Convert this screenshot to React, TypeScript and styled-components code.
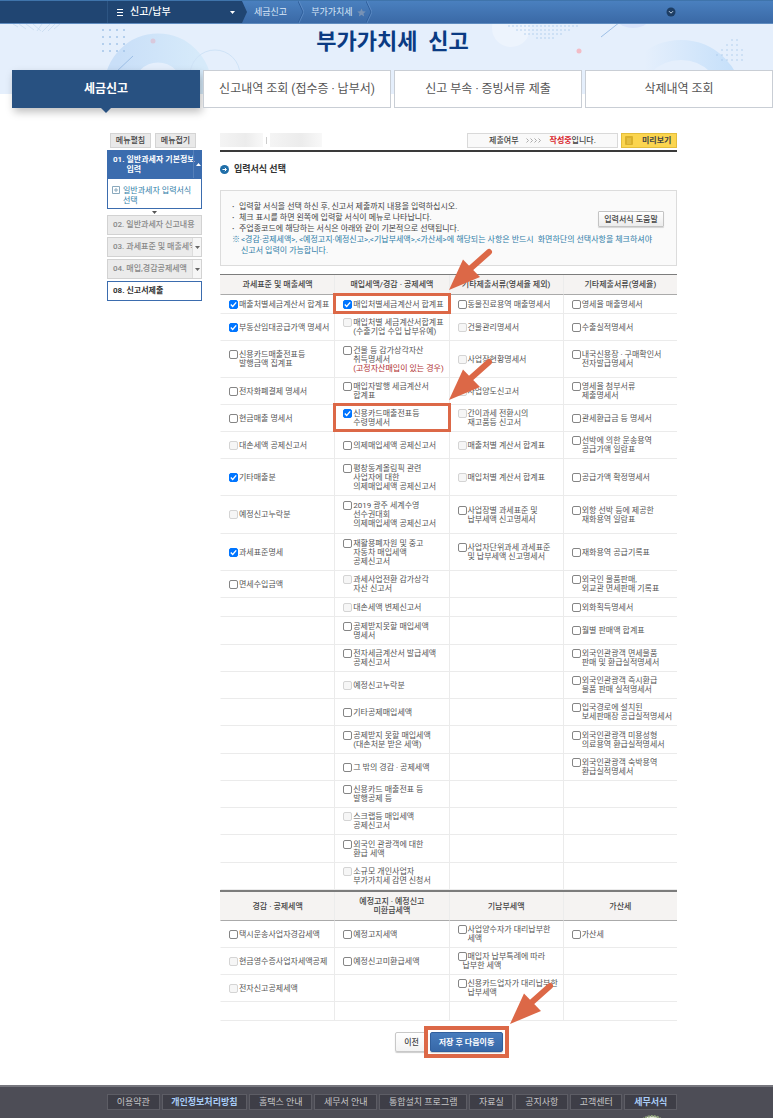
import React from "react";
import styled, { createGlobalStyle, css } from "styled-components";

const Global = createGlobalStyle`
  *, *::before, *::after { box-sizing: border-box; }
  body {
    margin: 0;
    background: #fff;
    color: #555;
    font: 8px/9px Roboto, "Noto Sans CJK KR", sans-serif;
  }
  button { font: inherit; color: inherit; cursor: pointer; padding: 0; }
  a { color: inherit; text-decoration: none; }
  ul { list-style: none; margin: 0; padding: 0; }
  h1, h2, p { margin: 0; }
`;

const accent = "#dc6847";

const Page = styled.div`
  min-height: 100vh;
  display: flex;
  flex-direction: column;
`;

/* ---------- top bar ---------- */

const TopBar = styled.header`
  display: flex;
  height: 24px;
  padding-right: 96px;
  border-top: 1px solid #3f74ab;
  border-bottom: 1px solid #5f8cc0;
  background: linear-gradient(#4a80bf, #3a69a6);
  color: #dce9f8;
  font-size: 9px;
  line-height: 22px;
`;

const MenuArea = styled.div`
  background: #204572;
  padding-left: 107px;
`;

const MenuButton = styled.button`
  display: flex;
  align-items: center;
  width: 135px;
  height: 22px;
  padding: 0 7px 0 9px;
  border: 0;
  border-left: 1px solid #2d5583;
  background: none;
  color: #fff;
  font-size: 10px;
  font-weight: 500;
  gap: 7px;

  span {
    flex: 1;
    text-align: left;
  }
`;

const Crumbs = styled.nav`
  display: flex;
  flex: 1;
  align-items: center;

  a {
    display: flex;
    align-items: center;
    gap: 4px;
    padding: 0 11px 0 7px;
  }
  a:last-of-type { padding-right: 0; }
`;

const RoundButton = styled.button`
  display: flex;
  align-self: center;
  width: 10px;
  height: 10px;
  margin-right: 1px;
  border: 0;
  background: none;
`;

/* ---------- title area ---------- */

const Hero = styled.div`
  position: relative;
  height: 70px;
  background: #e5effc;
  text-align: center;
`;

const HeroArt = styled.svg`
  position: absolute;
  inset: 0;
  width: 100%;
  height: 70px;
`;

const Title = styled.h1`
  position: relative;
  padding: 4px 0 0 12px;
  color: #0b3b83;
  font-size: 22px;
  line-height: 28px;
  font-weight: 700;
  white-space: pre;
`;

const Tabs = styled.nav`
  position: relative;
  display: grid;
  grid-template-columns: repeat(4, 1fr);
  gap: 3px;
  margin-top: -24px;
  padding-left: 12px;
`;

const Tab = styled.a<{ $active?: boolean }>`
  position: relative;
  height: 38px;
  border: 1px solid #c9ced5;
  background: #fff;
  color: #555;
  font-size: 12px;
  line-height: 36px;
  text-align: center;
  ${(p) =>
    p.$active &&
    css`
      border-color: #285181;
      background: #285181;
      color: #fff;
      font-weight: 700;
      box-shadow: 2px 4px 8px rgba(0, 0, 0, 0.25);

      &::after {
        content: "";
        position: absolute;
        top: 100%;
        left: 50%;
        margin-left: -6px;
        border: 6px solid transparent;
        border-top-color: #285181;
        border-bottom: 0;
      }
    `}
`;

/* ---------- body columns ---------- */

const Body = styled.div`
  display: flex;
  gap: 18px;
  padding: 25px 96px 33px 107px;
`;

const Side = styled.aside`
  flex: none;
  width: 95px;
`;

const SideButtons = styled.div`
  display: flex;
  gap: 4px;
  padding: 0 3px;
  margin-bottom: 2px;

  button {
    width: 41px;
    height: 15px;
    border: 1px solid #d4d4d4;
    background: #e9e9e9;
    color: #444;
    font-weight: 500;
  }
`;

const SideHead = styled.a`
  display: flex;
  height: 28px;
  background: #3b6cae;
  color: #fff;
  font-weight: 700;
  line-height: 10px;
`;

const SideHeadText = styled.span`
  flex: 1;
  min-width: 0;
  display: flex;
  gap: 2px;
  padding: 5px 0 0 6px;
  white-space: pre;
`;

const SideToggle = styled.span<{ $light?: boolean }>`
  flex: none;
  position: relative;
  display: flex;
  align-items: center;
  justify-content: center;
  width: 9px;
  border-left: 1px solid ${(p) => (p.$light ? "#ddd" : "#5580ba")};
  background: ${(p) => (p.$light ? "#f6f6f6" : "transparent")};
`;

const SideSub = styled.a`
  display: flex;
  gap: 3px;
  height: 31px;
  padding: 7px 4px 0;
  border: 1px solid #3b6cae;
  color: #2f7da8;
  line-height: 10px;
  white-space: pre;
`;

const PlusIcon = styled.svg`
  width: 8px;
  height: 8px;
`;

const DownMark = styled.div`
  display: flex;
  justify-content: center;
  height: 6px;
  padding-top: 2px;
`;

const SideItem = styled.a<{ $open?: boolean }>`
  display: flex;
  height: 20px;
  margin-bottom: 2px;
  border: 1px solid ${(p) => (p.$open ? "#3b6cae" : "#d2d2d2")};
  background: ${(p) => (p.$open ? "#fff" : "#ebebeb")};
  color: ${(p) => (p.$open ? "#333" : "#888")};
  font-weight: ${(p) => (p.$open ? 700 : 500)};
  line-height: 18px;

  > span:first-child {
    flex: 1;
    min-width: 0;
    padding-left: 5px;
    white-space: nowrap;
  }
`;

const Main = styled.main`
  flex: 1;
  min-width: 0;
`;

const StatusRow = styled.div`
  display: flex;
  align-items: center;
  gap: 3px;
  height: 19px;
  padding-bottom: 3px;
  border-bottom: 2px solid #3a3a3a;
`;

const Masked = styled.span<{ $wide?: boolean }>`
  width: ${(p) => (p.$wide ? 52 : 43)}px;
  height: 14px;
  background: linear-gradient(90deg, #f4f4f4, #ececec 60%, #f8f8f8);
`;

const Bar = styled.i`
  width: 1px;
  height: 7px;
  background: #ccc;
`;

const Status = styled.p`
  display: flex;
  justify-content: center;
  align-items: center;
  gap: 7px;
  width: 151px;
  height: 15px;
  margin-left: auto;
  border: 1px solid #d9d9d9;
  background: #f9f9f9;
  color: #444;
  font-weight: 500;

  b { color: #d8232a; }
`;

const Preview = styled.button`
  display: flex;
  align-items: center;
  gap: 9px;
  width: 56px;
  height: 15px;
  padding-left: 3px;
  border: 1px solid #e3bd3b;
  background: #fbd54f;
  color: #444;
  font-weight: 700;
`;

const Heading = styled.h2`
  display: flex;
  align-items: center;
  gap: 5px;
  height: 12px;
  margin: 11px 0 15px;
  color: #333;
  font-size: 9px;
  font-weight: 700;
`;

const Info = styled.section`
  display: flex;
  align-items: flex-start;
  height: 76px;
  padding: 10px 12px 0 11px;
  border: 1px solid #dcdcdc;
  background: #fafafa;
  line-height: 11px;
`;

const Notes = styled.ul`
  flex: 1;
  width: 0;
  white-space: nowrap;
  color: #444;

  li { display: flex; gap: 4px; }
  li::before { content: "·"; width: 3px; font-weight: 700; }
  li.mark { gap: 2px; color: #2f7da8; white-space: pre; }
  li.mark::before { content: "※"; width: 7px; font-weight: 400; }
`;

const HelpButton = styled.button`
  width: 66px;
  height: 16px;
  margin-top: 10px;
  border: 1px solid #c4c4c4;
  border-radius: 1px;
  background: linear-gradient(#fff, #ececec);
  box-shadow: 0 1px 1px rgba(0, 0, 0, 0.15);
  color: #444;
  font-weight: 500;
`;

/* ---------- form tables ---------- */

const Table = styled.table<{ $first?: boolean }>`
  width: 100%;
  margin-top: ${(p) => (p.$first ? 8 : 0)}px;
  table-layout: fixed;
  border-collapse: separate;
  border-spacing: 0;
  border-top: ${(p) => (p.$first ? 1 : 2)}px solid #7c7c7c;

  th {
    height: ${(p) => (p.$first ? 20 : 29)}px;
    padding: 0;
    border-bottom: 1px solid #aaa;
    border-left: 1px solid #ececec;
    background: #f5f3f2;
    color: #444;
    font-weight: 500;
    white-space: pre;
  }

  td {
    position: relative;
    padding: 0 0 0 8px;
    border-bottom: 1px solid #ebebeb;
    border-left: 1px solid #ebebeb;
    vertical-align: middle;
  }

  th:first-child,
  td:first-child { border-left-color: transparent; }
`;

const rowHeight: Record<number, number> = { 1: 19, 2: 27, 3: 37 };

const Row = styled.tr<{ $lines: number }>`
  height: ${(p) => rowHeight[p.$lines]}px;
  &:nth-child(4n + 8) { height: ${(p) => rowHeight[p.$lines] + (p.$lines > 1 ? 1 : 0)}px; }
`;

const Check = styled.label`
  display: flex;
  gap: 1px;
  white-space: pre;

  em { color: #b03030; font-style: normal; }
`;

const Box = styled.input`
  appearance: none;
  flex: none;
  width: 9px;
  height: 9px;
  margin: 0;
  border: 1px solid #858585;
  border-radius: 2px;
  background: #fff;

  &:checked {
    border-color: #0075ff;
    background: #0075ff
      url("data:image/svg+xml,%3Csvg xmlns='http://www.w3.org/2000/svg' viewBox='0 0 7 7'%3E%3Cpath d='M.8 3.6 2.7 5.5 6.2 1.4' fill='none' stroke='%23fff' stroke-width='1.4'/%3E%3C/svg%3E");
  }
  &:disabled {
    border-color: #d4d4d4;
    background: #f6f6f6;
  }
`;

const ItemText = styled.span<{ $outdent?: boolean }>`
  ${(p) =>
    p.$outdent &&
    css`
      margin-left: -5px;
      text-indent: 5px;
    `}
`;

/* ---------- callouts ---------- */

const Frame = styled.span<{ $around?: "cell" | "button" }>`
  position: absolute;
  z-index: 2;
  inset: ${(p) => (p.$around === "button" ? "-6px" : "-2px -2px -1px -2px")};
  border: ${(p) => (p.$around === "button" ? 4 : 3)}px solid ${accent};
  pointer-events: none;

  svg {
    position: absolute;
    left: calc(100% + ${(p) => (p.$around === "button" ? 5 : 1)}px);
    bottom: calc(100% + 6px);
    width: 46px;
    height: 42px;
    overflow: visible;
  }
`;

function Callout({ around = "cell" }: { around?: "cell" | "button" }) {
  return (
    <Frame $around={around} aria-hidden="true">
      <svg viewBox="0 0 46 42">
        <path d="M22 20 40 4" stroke={accent} strokeWidth="6" strokeLinecap="round" />
        <path d="M0 42 14 11.500 31 29Z" fill={accent} />
      </svg>
    </Frame>
  );
}

/* ---------- actions and footer ---------- */

const Actions = styled.div`
  display: flex;
  justify-content: center;
  gap: 2px;
  margin-top: 11px;
  padding-left: 1px;
`;

const ActionWrap = styled.div`
  position: relative;
  display: flex;
`;

const Action = styled.button<{ $primary?: boolean }>`
  width: ${(p) => (p.$primary ? 73 : 33)}px;
  height: 20px;
  border: 1px solid ${(p) => (p.$primary ? "#315f9c" : "#c8c8c8")};
  border-radius: 2px;
  background: ${(p) => (p.$primary ? "linear-gradient(#477cbd, #3768a8)" : "linear-gradient(#fff, #f3f3f3)")};
  color: ${(p) => (p.$primary ? "#fff" : "#444")};
  font-weight: ${(p) => (p.$primary ? 700 : 500)};
  box-shadow: 0 1px 1px rgba(0, 0, 0, 0.2);
`;

const Footer = styled.footer`
  position: relative;
  flex: 1;
  min-height: 33px;
  padding: 7px 96px 8px 107px;
  border-top: 2px solid #77777e;
  background: #4d4d56;
  overflow: hidden;
`;

const FooterNav = styled.nav`
  display: flex;
  gap: 2px;
`;

const FooterLink = styled.a<{ $strong?: boolean }>`
  flex: 1 1 auto;
  height: 16px;
  padding: 0 7px;
  border: 1px solid #5d5d65;
  background: #3e3e47;
  color: ${(p) => (p.$strong ? "#a9cdf8" : "#c6c6c8")};
  font-size: 9px;
  font-weight: ${(p) => (p.$strong ? 700 : 400)};
  line-height: 14px;
  text-align: center;
  white-space: nowrap;
`;

const Emblem = styled.svg`
  position: absolute;
  top: 28px;
  right: 105px;
  width: 32px;
  height: 32px;
`;

/* ---------- data ---------- */

type Item = {
  text: string;
  on?: boolean;
  off?: boolean;
  note?: string;
  callout?: boolean;
  outdent?: boolean;
};
type RowData = [number, Item | null, Item | null, Item | null, Item | null];

const i = (text: string, extra: Partial<Item> = {}): Item => ({ text, ...extra });
const ON = { on: true };
const OFF = { off: true };

const mainRows: RowData[] = [
  [1, i("매출처별세금계산서 합계표", ON), i("매입처별세금계산서 합계표", { on: true, callout: true }), i("동물진료용역 매출명세서"), i("영세율 매출명세서")],
  [2, i("부동산임대공급가액 명세서", ON), i("매입처별 세금계산서합계표\n(수출기업 수입 납부유예)", OFF), i("건물관리명세서", OFF), i("수출실적명세서")],
  [3, i("신용카드매출전표등\n발행금액 집계표"), i("건물 등 감가상각자산\n취득명세서\n", { note: "(고정자산매입이 있는 경우)" }), i("사업장현황명세서", OFF), i("내국신용장 · 구매확인서\n전자발급명세서")],
  [2, i("전자화폐결제 명세서"), i("매입자발행 세금계산서\n합계표"), i("사업양도신고서", OFF), i("영세율 첨부서류\n제출명세서")],
  [2, i("현금매출 명세서"), i("신용카드매출전표등\n수령명세서", { on: true, callout: true }), i("간이과세 전환시의\n재고품등 신고서", OFF), i("관세환급금 등 명세서")],
  [2, i("대손세액 공제신고서", OFF), i("의제매입세액 공제신고서"), i("매출처별 계산서 합계표", OFF), i("선박에 의한 운송용역\n공급가액 일람표")],
  [3, i("기타매출분", ON), i("평창동계올림픽 관련\n사업자에 대한\n의제매입세액 공제신고서"), i("매입처별 계산서 합계표", OFF), i("공급가액 확정명세서")],
  [3, i("예정신고누락분", OFF), i("2019 광주 세계수영\n선수권대회\n의제매입세액 공제신고서"), i("사업장별 과세표준 및\n납부세액 신고명세서"), i("외항 선박 등에 제공한\n재화용역 일람표")],
  [3, i("과세표준명세", ON), i("재활용폐자원 및 중고\n자동차 매입세액\n공제신고서"), i("사업자단위과세 과세표준\n및 납부세액 신고명세서"), i("재화용역 공급기록표")],
  [2, i("면세수입금액"), i("과세사업전환 감가상각\n자산 신고서", OFF), null, i("외국인 물품판매,\n외교관 면세판매 기록표")],
  [1, null, i("대손세액 변제신고서", OFF), null, i("외화획득명세서")],
  [2, null, i("공제받지못할 매입세액\n명세서"), null, i("월별 판매액 합계표")],
  [2, null, i("전자세금계산서 발급세액\n공제신고서"), null, i("외국인관광객 면세물품\n판매 및 환급실적명세서")],
  [2, null, i("예정신고누락분", OFF), null, i("외국인관광객 즉시환급\n물품 판매 실적명세서")],
  [2, null, i("기타공제매입세액"), null, i("입국경로에 설치된\n보세판매장 공급실적명세서")],
  [2, null, i("공제받지 못할 매입세액\n(대손처분 받은 세액)"), null, i("외국인관광객 미용성형\n의료용역 환급실적명세서")],
  [2, null, i("그 밖의 경감 · 공제세액"), null, i("외국인관광객 숙박용역\n환급실적명세서")],
  [2, null, i("신용카드 매출전표 등\n발행공제 등"), null, null],
  [2, null, i("스크랩등 매입세액\n공제신고서", OFF), null, null],
  [2, null, i("외국인 관광객에 대한\n환급 세액"), null, null],
  [2, null, i("소규모 개인사업자\n부가가치세 감면 신청서", OFF), null, null],
];

const extraRows: RowData[] = [
  [2, i("택시운송사업자경감세액"), i("예정고지세액"), i("사업양수자가 대리납부한\n세액"), i("가산세")],
  [2, i("현금영수증사업자세액공제", OFF), i("예정신고미환급세액"), i("매입자 납부특례에 따라\n납부한 세액", { outdent: true }), null],
  [2, i("전자신고공제세액", OFF), null, i("신용카드업자가 대리납부한\n납부세액"), null],
  [1, null, null, null, null],
];

const footerLinks: [string, boolean?][] = [
  ["이용약관"],
  ["개인정보처리방침", true],
  ["홈택스 안내"],
  ["세무서 안내"],
  ["통합설치 프로그램"],
  ["자료실"],
  ["공지사항"],
  ["고객센터"],
  ["세무서식", true],
];

function FormTable({ heads, rows, first }: { heads: string[]; rows: RowData[]; first?: boolean }) {
  return (
    <Table $first={first}>
      <thead>
        <tr>
          {heads.map((h) => (
            <th key={h} scope="col">{h}</th>
          ))}
        </tr>
      </thead>
      <tbody>
        {rows.map(([lines, ...cells], r) => (
          <Row key={r} $lines={lines}>
            {cells.map((cell, c) => (
              <td key={c}>
                {cell && (
                  <Check>
                    <Box type="checkbox" defaultChecked={cell.on} disabled={cell.off} />
                    <ItemText $outdent={cell.outdent}>
                      {cell.text}
                      {cell.note && <em>{cell.note}</em>}
                    </ItemText>
                  </Check>
                )}
                {cell?.callout && <Callout />}
              </td>
            ))}
          </Row>
        ))}
      </tbody>
    </Table>
  );
}

function Dots({ x, y, rows, gap, r = 1 }: { x: number; y: number; rows: [number, number][]; gap: number; r?: number }) {
  return (
    <g fill="#a3c4e8">
      {rows.map(([from, count], row) =>
        Array.from({ length: count }, (_, n) => (
          <circle key={`${row}-${n}`} cx={x + (from + n) * gap} cy={y + row * gap} r={r} />
        ))
      )}
    </g>
  );
}

function Chevron() {
  return (
    <svg width="6" height="22" viewBox="0 0 6 22" fill="none" aria-hidden="true">
      <path d="M0 0 5 11 0 22" stroke="#2f5f9c" />
      <path d="M1 0 6 11 1 22" stroke="#6a98cf" strokeOpacity=".6" />
    </svg>
  );
}

function Caret({ up, color }: { up?: boolean; color: string }) {
  return (
    <svg width="5" height="3" viewBox="0 0 5 3" aria-hidden="true">
      <path d={up ? "M0 3 2.500 0 5 3Z" : "M0 0 2.500 3 5 0Z"} fill={color} />
    </svg>
  );
}

export default function App() {
  return (
    <Page>
      <Global />
      <TopBar>
        <MenuArea>
          <MenuButton type="button">
            <svg width="6" height="7" viewBox="0 0 6 7" aria-hidden="true">
              <path d="M0 .5h6M0 3.500h6M0 6.500h6" stroke="#fff" />
            </svg>
            <span>신고/납부</span>
            <Caret color="#fff" />
          </MenuButton>
        </MenuArea>
        <svg width="5" height="22" viewBox="0 0 5 22" aria-hidden="true">
          <path d="M0 0 5 11 0 22Z" fill="#204572" />
        </svg>
        <Crumbs>
          <a href="#tax">세금신고</a>
          <Chevron />
          <a href="#vat">
            부가가치세
            <svg width="9" height="9" viewBox="0 0 24 24" aria-hidden="true">
              <path d="m12 1 3.300 7.400 8 .8-6 5.300 1.800 7.900L12 18.300l-7.100 4.100 1.800-7.900-6-5.300 8-.8z" fill="#7792b5" />
            </svg>
          </a>
          <Chevron />
        </Crumbs>
        <RoundButton type="button" aria-label="전체 메뉴">
          <svg width="10" height="10" viewBox="0 0 10 10">
            <circle cx="5" cy="5" r="4.500" fill="#1d3d63" />
            <path d="M3 4.200 5 6.200 7 4.200" fill="none" stroke="#c8d8ea" />
          </svg>
        </RoundButton>
      </TopBar>

      <Hero>
        <HeroArt viewBox="0 0 773 70" preserveAspectRatio="xMidYMin slice" aria-hidden="true">
          <defs>
            <linearGradient id="ringA" x1="0" x2="1">
              <stop offset="0" stopColor="#c9dff8" />
              <stop offset="1" stopColor="#d6eafa" />
            </linearGradient>
            <linearGradient id="ringB" x1="0" x2="1">
              <stop offset=".15" stopColor="#e5effc" />
              <stop offset="1" stopColor="#c6e0fa" />
            </linearGradient>
          </defs>
          <path d="m13 0 5 3m1-3 7 5m0-5 8 6m-1-6 8 7m1-7-5 7m13-7-8 8m13-8-7 7m12-7-6 5" stroke="#c3d8ee" strokeWidth=".7" fill="none" />
          <circle cx="158" cy="63" r="39" fill="none" stroke="url(#ringA)" strokeWidth="29" />
          <circle cx="215" cy="51" r="25" fill="none" stroke="#cfe3f7" />
          <path d="M116 48 133 32" stroke="#9dbfe6" />
          <circle cx="153" cy="17" r="2.500" fill="#d9c9dc" />
          <Dots x={103} y={6} gap={7} rows={[[0, 4], [0, 4], [0, 4], [0, 4]]} />
          <circle cx="511" cy="4" r="19" fill="#edf4fd" />
          <Dots x={509} y={2} gap={4} r={0.7} rows={[[0, 18], [2, 14], [4, 10], [7, 5]]} />
          <path d="M601 13 620-2" stroke="#9dbfe6" />
          <circle cx="633" cy="-20" r="24" fill="#d8e3fa" />
          <circle cx="579" cy="27" r="2.500" fill="#f2bcc6" />
          <circle cx="681" cy="78" r="52" fill="none" stroke="url(#ringB)" strokeWidth="20" />
          <Dots x={717} y={16} gap={5} r={0.7} rows={[[3, 2], [2, 3], [1, 5], [0, 6], [1, 5]]} />
        </HeroArt>
        <Title>{"부가가치세  신고"}</Title>
      </Hero>
      <Tabs>
        <Tab href="#file" $active>세금신고</Tab>
        <Tab href="#history">신고내역 조회 (접수증 · 납부서)</Tab>
        <Tab href="#attach">신고 부속 · 증빙서류 제출</Tab>
        <Tab href="#deleted">삭제내역 조회</Tab>
      </Tabs>

      <Body>
        <Side>
          <SideButtons>
            <button type="button">메뉴펼침</button>
            <button type="button">메뉴접기</button>
          </SideButtons>
          <SideHead href="#step1">
            <SideHeadText>
              <span>01.</span>
              <span>{"일반과세자 기본정보\n입력"}</span>
            </SideHeadText>
            <SideToggle><Caret up color="#fff" /></SideToggle>
          </SideHead>
          <SideSub href="#select">
            <PlusIcon viewBox="0 0 8 8" aria-hidden="true">
              <path d="M.5.5h7v7h-7zM2 4h4M4 2v4" fill="none" stroke="#8aa9bd" />
            </PlusIcon>
            <span>{"일반과세자 입력서식\n선택"}</span>
          </SideSub>
          <DownMark><Caret color="#555" /></DownMark>
          <SideItem href="#step2"><span>02. 일반과세자 신고내용</span></SideItem>
          <SideItem href="#step3">
            <span>03. 과세표준 및 매출세액</span>
            <SideToggle $light><Caret color="#666" /></SideToggle>
          </SideItem>
          <SideItem href="#step4">
            <span>04. 매입,경감공제세액</span>
            <SideToggle $light><Caret color="#666" /></SideToggle>
          </SideItem>
          <SideItem href="#step8" $open><span>08. 신고서제출</span></SideItem>
        </Side>

        <Main>
          <StatusRow>
            <Masked />
            <Bar />
            <Masked $wide />
            <Status>
              <span>제출여부</span>
              <svg width="17" height="5" viewBox="0 0 17 5" fill="none" aria-hidden="true">
                <path d="m.5.5 2 2-2 2m4-4 2 2-2 2m4-4 2 2-2 2m4-4 2 2-2 2" stroke="#aaa" />
              </svg>
              <span><b>작성중</b>입니다.</span>
            </Status>
            <Preview type="button">
              <svg width="8" height="9" viewBox="0 0 8 9" aria-hidden="true">
                <rect width="8" height="9" rx="1" fill="#d9b02c" />
                <path d="M2 3h4M2 5h4M2 7h4" stroke="#eccb55" />
              </svg>
              미리보기
            </Preview>
          </StatusRow>

          <Heading>
            <svg width="9" height="9" viewBox="0 0 9 9" aria-hidden="true">
              <circle cx="4.500" cy="4.500" r="4.500" fill="#1f6ea8" />
              <path d="M2.500 4.500h3.500M4.800 2.800 6.500 4.500 4.800 6.200" stroke="#fff" fill="none" />
            </svg>
            입력서식 선택
          </Heading>

          <Info>
            <Notes>
              <li>입력할 서식을 선택 하신 후, 신고서 제출까지 내용을 입력하십시오.</li>
              <li>체크 표시를 하면 왼쪽에 입력할 서식이 메뉴로 나타납니다.</li>
              <li>주업종코드에 해당하는 서식은 아래와 같이 기본적으로 선택됩니다.</li>
              <li className="mark">
                {"<경감·공제세액>, <예정고지·예정신고>,<기납부세액>,<가산세>에 해당되는 사항은 반드시  화면하단의 선택사항을 체크하셔야\n신고서 입력이 가능합니다."}
              </li>
            </Notes>
            <HelpButton type="button">입력서식 도움말</HelpButton>
          </Info>

          <FormTable
            first
            heads={["과세표준 및 매출세액", "매입세액/경감 · 공제세액", "기타제출서류(영세율 제외)", "기타제출서류(영세율)"]}
            rows={mainRows}
          />
          <FormTable
            heads={["경감 · 공제세액", "예정고지 · 예정신고\n미환급세액", "기납부세액", "가산세"]}
            rows={extraRows}
          />

          <Actions>
            <Action type="button">이전</Action>
            <ActionWrap>
              <Action type="button" $primary>저장 후 다음이동</Action>
              <Callout around="button" />
            </ActionWrap>
          </Actions>
        </Main>
      </Body>

      <Footer>
        <FooterNav>
          {footerLinks.map(([label, strong]) => (
            <FooterLink key={label} href={`#${label}`} $strong={strong}>{label}</FooterLink>
          ))}
        </FooterNav>
        <Emblem viewBox="0 0 32 32" aria-hidden="true">
          <circle cx="16" cy="16" r="15" fill="#dfe5d2" stroke="#8fa37c" strokeWidth="2" strokeDasharray="2 1" />
        </Emblem>
      </Footer>
    </Page>
  );
}
